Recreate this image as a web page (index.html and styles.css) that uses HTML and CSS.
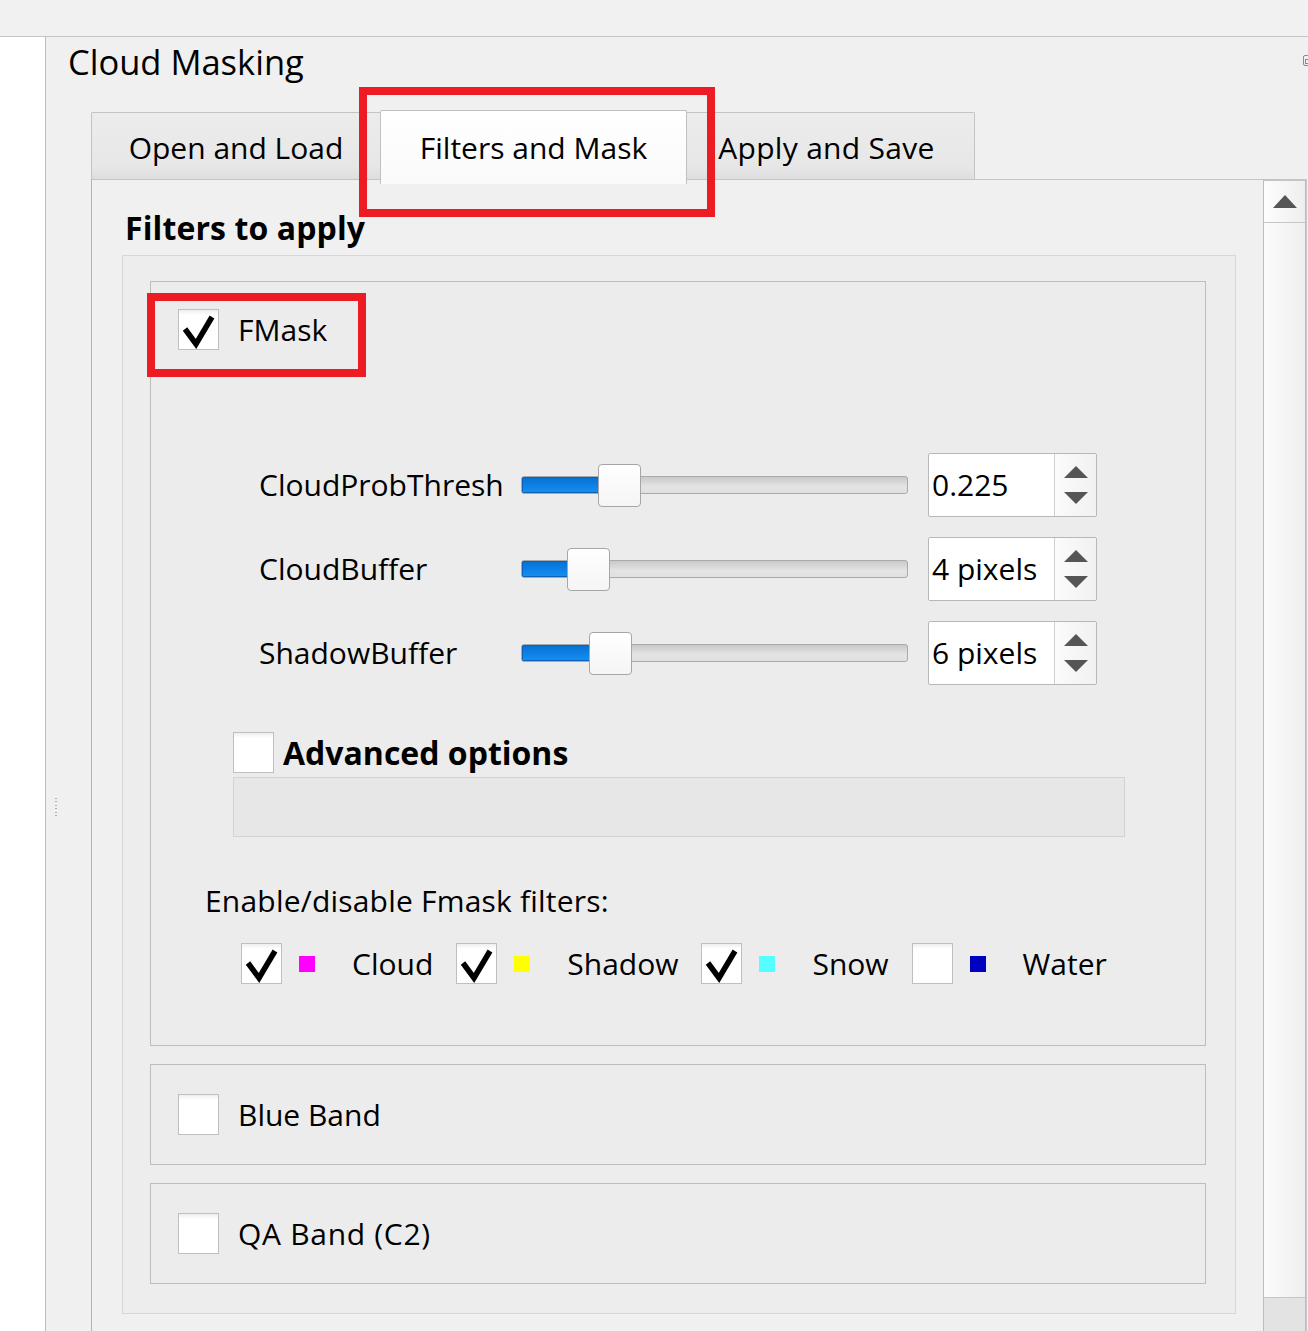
FILE: index.html
```html
<!DOCTYPE html>
<html>
<head>
<meta charset="utf-8">
<title>Cloud Masking</title>
<link rel="stylesheet" href="styles.css">
</head>
<body>
<div class="topbar"></div>
<div class="main">
  <div class="sidebar"></div>
  <div class="dock">
    <div class="dock-head">
      <h1 class="title">Cloud Masking</h1>
      <span class="float-icon"><span class="float-inner"></span></span>
    </div>
    <div class="dock-body">
      <div class="grip"><span class="grip-dots"></span></div>
      <div class="tabwidget">
        <div class="tabbar">
          <div class="tab tab-first">Open and Load</div>
          <div class="tab tab-active">Filters and Mask</div>
          <div class="tab tab-last">Apply and Save</div>
        </div>
        <div class="pane">
          <div class="viewport">
            <div class="group-title">Filters to apply</div>
            <div class="frame">
              <div class="box box-fmask">
                <div class="check-row">
                  <span class="cb"><svg class="tick" viewBox="0 0 39 39"><polyline points="6,19 17,34 33,7"/></svg></span>
                  <span class="lbl">FMask</span>
                </div>
                <div class="sliders">
                  <div class="s-label">CloudProbThresh</div>
                  <div class="slider">
                    <div class="groove"><div class="fill" style="width:80px"></div></div>
                    <div class="handle" style="left:77px"></div>
                  </div>
                  <div class="spin">
                    <div class="spin-text">0.225</div>
                    <div class="spin-btns">
                      <svg class="arrow" viewBox="0 0 24 12"><polygon points="12,0 24,12 0,12"/></svg>
                      <svg class="arrow" viewBox="0 0 24 12"><polygon points="0,0 24,0 12,12"/></svg>
                    </div>
                  </div>

                  <div class="s-label">CloudBuffer</div>
                  <div class="slider">
                    <div class="groove"><div class="fill" style="width:49px"></div></div>
                    <div class="handle" style="left:46px"></div>
                  </div>
                  <div class="spin">
                    <div class="spin-text">4 pixels</div>
                    <div class="spin-btns">
                      <svg class="arrow" viewBox="0 0 24 12"><polygon points="12,0 24,12 0,12"/></svg>
                      <svg class="arrow" viewBox="0 0 24 12"><polygon points="0,0 24,0 12,12"/></svg>
                    </div>
                  </div>

                  <div class="s-label">ShadowBuffer</div>
                  <div class="slider">
                    <div class="groove"><div class="fill" style="width:71px"></div></div>
                    <div class="handle" style="left:68px"></div>
                  </div>
                  <div class="spin">
                    <div class="spin-text">6 pixels</div>
                    <div class="spin-btns">
                      <svg class="arrow" viewBox="0 0 24 12"><polygon points="12,0 24,12 0,12"/></svg>
                      <svg class="arrow" viewBox="0 0 24 12"><polygon points="0,0 24,0 12,12"/></svg>
                    </div>
                  </div>
                </div>

                <div class="adv-row">
                  <span class="cb"></span>
                  <span class="adv-lbl">Advanced options</span>
                </div>
                <div class="adv-panel"></div>

                <div class="enable-lbl">Enable/disable Fmask filters:</div>
                <div class="filters">
                  <div class="filter">
                    <span class="cb"><svg class="tick" viewBox="0 0 39 39"><polyline points="6,19 17,34 33,7"/></svg></span>
                    <span class="swatch sw-cloud"></span>
                    <span class="f-lbl">Cloud</span>
                  </div>
                  <div class="filter">
                    <span class="cb"><svg class="tick" viewBox="0 0 39 39"><polyline points="6,19 17,34 33,7"/></svg></span>
                    <span class="swatch sw-shadow"></span>
                    <span class="f-lbl">Shadow</span>
                  </div>
                  <div class="filter">
                    <span class="cb"><svg class="tick" viewBox="0 0 39 39"><polyline points="6,19 17,34 33,7"/></svg></span>
                    <span class="swatch sw-snow"></span>
                    <span class="f-lbl">Snow</span>
                  </div>
                  <div class="filter">
                    <span class="cb"></span>
                    <span class="swatch sw-water"></span>
                    <span class="f-lbl">Water</span>
                  </div>
                </div>
              </div>

              <div class="box box-small">
                <span class="cb"></span>
                <span class="lbl">Blue Band</span>
              </div>
              <div class="box box-small">
                <span class="cb"></span>
                <span class="lbl lbl-qa">QA Band (C2)</span>
              </div>
            </div>
          </div>
          <div class="scrollbar">
            <div class="sb-up"><svg class="sb-arrow" viewBox="0 0 24 13"><polygon points="12,0 24,13 0,13"/></svg></div>
            <div class="sb-handle"></div>
            <div class="sb-track"></div>
          </div>
        </div>
      </div>
    </div>
  </div>
</div>
<div class="hl hl-tab"></div>
<div class="hl hl-fmask"></div>
</body>
</html>
```

FILE: styles.css
```css
* { box-sizing: border-box; }
html, body { margin: 0; padding: 0; }
body {
  width: 1308px;
  height: 1331px;
  overflow: hidden;
  position: relative;
  background: #f0f0f0;
  color: #000;
  font-family: "Open Sans", "Noto Sans", sans-serif;
}

.topbar {
  height: 37px;
  background: #f1f1f1;
  border-bottom: 1px solid #c4c4c4;
}

.main {
  display: flex;
  height: 1294px;
}

.sidebar {
  flex: none;
  width: 46px;
  background: #fff;
  border-right: 1px solid #bcbcbc;
}

.dock {
  flex: 1;
  min-width: 0;
  display: flex;
  flex-direction: column;
  overflow: hidden;
}

.dock-head {
  flex: none;
  height: 73px;
  display: flex;
  align-items: flex-start;
}

.title {
  margin: 3px 0 0 22px;
  font-size: 34.5px;
  font-weight: 400;
  line-height: 44px;
}

.float-icon {
  margin: 18px -5px 0 auto;
  width: 10px;
  height: 11px;
  border: 1px solid #8a8a8a;
  border-radius: 2px;
  display: flex;
  align-items: flex-end;
  justify-content: flex-start;
  padding: 0 0 1px 1px;
}
.float-inner {
  width: 5px;
  height: 5px;
  border: 1px solid #8a8a8a;
}

.dock-body {
  flex: 1;
  min-height: 0;
  display: flex;
}

.grip {
  flex: none;
  width: 45px;
  padding: 688px 0 0 9px;
}
.grip-dots {
  display: block;
  width: 2px;
  height: 18px;
  background: repeating-linear-gradient(#b0b0b0 0 1px, transparent 1px 3.4px);
}

.tabwidget {
  flex: 1;
  min-width: 0;
  margin-right: 1px;
  display: flex;
  flex-direction: column;
}

.tabbar {
  flex: none;
  height: 69px;
  display: flex;
  align-items: flex-end;
}

.tab {
  height: 67px;
  border: 1px solid #c4c4c4;
  border-bottom: none;
  background: linear-gradient(#ececec, #e7e7e7 80%, #dedede);
  font-size: 30px;
  line-height: 40px;
  display: flex;
  justify-content: center;
  padding-top: 15px;
  white-space: nowrap;
}
.tab-first {
  width: 289px;
  border-right: none;
  border-top-left-radius: 2px;
}
.tab-active {
  position: relative;
  z-index: 1;
  width: 307px;
  height: 74px;
  margin-bottom: -5px;
  padding-top: 17px;
  background: linear-gradient(#ffffff, #fafafa);
  border-color: #c0c0c0;
  border-radius: 2px 2px 0 0;
}
.tab-last {
  width: 288px;
  border-left: none;
  border-top-right-radius: 2px;
  padding-right: 8px;
  letter-spacing: 0.3px;
}

.pane {
  flex: 1;
  min-height: 0;
  display: flex;
  border-top: 1px solid #c4c4c4;
  border-left: 1px solid #b4b4b4;
  border-right: 1px solid #c8c8c8;
}

.viewport {
  flex: 1;
  min-width: 0;
  overflow: hidden;
  padding: 28px 0 0 30px;
}

.group-title {
  margin-left: 3px;
  font-size: 32px;
  font-weight: 700;
  line-height: 40px;
  letter-spacing: 0.1px;
}

.frame {
  margin-top: 7px;
  width: 1114px;
  border: 1px solid #d7d7d7;
  background: #ededed;
  padding: 25px 29px 29px 27px;
}

.box {
  border: 1px solid #bdbdbd;
  background: #ececec;
}

.box-fmask {
  padding: 27px 0 61px 27px;
}

.cb {
  flex: none;
  width: 41px;
  height: 41px;
  border: 1px solid #bfbfbf;
  background: linear-gradient(#eeeeee, #ffffff 5px);
  display: block;
}
.tick {
  display: block;
  width: 39px;
  height: 39px;
}
.tick polyline {
  fill: none;
  stroke: #000;
  stroke-width: 5.5;
  stroke-linejoin: miter;
  stroke-linecap: butt;
}

.check-row {
  display: flex;
  align-items: center;
  gap: 19px;
  height: 41px;
}
.lbl {
  font-size: 30px;
  line-height: 40px;
  white-space: nowrap;
}
.lbl-qa {
  letter-spacing: 0.7px;
}

.sliders {
  margin: 103px 0 0 81px;
  display: grid;
  grid-template-columns: 242px 387px 169px;
  grid-auto-rows: 64px;
  column-gap: 20px;
  row-gap: 20px;
  align-items: center;
}
.s-label {
  font-size: 30px;
  line-height: 40px;
  white-space: nowrap;
}

.slider {
  position: relative;
  height: 43px;
  display: flex;
  align-items: center;
}
.groove {
  width: 100%;
  height: 18px;
  border: 1px solid #aaaaaa;
  border-radius: 3px;
  background: linear-gradient(#c9c9c9, #e4e4e4 60%, #e0e0e0);
  overflow: hidden;
}
.fill {
  height: 100%;
  background: linear-gradient(#0470d4, #168ff1);
  border-right: 1px solid #0a5aa8;
  box-shadow: inset 0 0 0 1px #0b62b6;
}
.handle {
  position: absolute;
  top: 0;
  width: 43px;
  height: 43px;
  border: 1px solid #a6a6a6;
  border-radius: 4px;
  background: linear-gradient(#ffffff, #f5f5f5);
}

.spin {
  height: 64px;
  border: 1px solid #b8b8b8;
  border-radius: 2px;
  background: #fff;
  display: flex;
}
.spin-text {
  flex: 1;
  padding-left: 3px;
  font-size: 30px;
  line-height: 40px;
  display: flex;
  align-items: center;
  white-space: nowrap;
}
.spin-btns {
  flex: none;
  width: 42px;
  border-left: 1px solid #d0d0d0;
  background: linear-gradient(90deg, #fbfbfb, #f1f1f1);
  display: flex;
  flex-direction: column;
  align-items: center;
  justify-content: center;
  gap: 14px;
}
.arrow {
  display: block;
  width: 24px;
  height: 12px;
  fill: #555;
}

.adv-row {
  margin: 47px 0 0 55px;
  display: flex;
  align-items: center;
  gap: 9px;
  height: 41px;
}
.adv-lbl {
  font-size: 32px;
  font-weight: 700;
  line-height: 40px;
  white-space: nowrap;
}
.adv-panel {
  margin: 4px 0 0 55px;
  width: 892px;
  height: 60px;
  border: 1px solid #d3d3d3;
  background: #e7e7e7;
}

.enable-lbl {
  margin: 44px 0 0 27px;
  font-size: 30px;
  line-height: 40px;
  white-space: nowrap;
  letter-spacing: 0.2px;
}

.filters {
  margin: 22px 0 0 63px;
  display: flex;
  align-items: center;
  gap: 23px;
  height: 41px;
}
.filter {
  display: flex;
  align-items: center;
}
.swatch {
  flex: none;
  width: 16px;
  height: 16px;
  margin: 1px 37px 0 17px;
}
.sw-cloud { background: #ff00ff; }
.sw-shadow { background: #ffff00; }
.sw-snow { background: #55ffff; }
.sw-water { background: #0000c0; }
.f-lbl {
  font-size: 30px;
  line-height: 40px;
  white-space: nowrap;
}

.box-small {
  margin-top: 18px;
  height: 101px;
  padding-left: 27px;
  display: flex;
  align-items: center;
  gap: 19px;
}

.scrollbar {
  flex: none;
  width: 43px;
  border-left: 1px solid #bdbdbd;
  border-right: 1px solid #bdbdbd;
  border-top: 1px solid #c4c4c4;
  display: flex;
  flex-direction: column;
  background: #e4e4e4;
}
.sb-up {
  flex: none;
  height: 42px;
  border-bottom: 1px solid #c6c6c6;
  background: linear-gradient(90deg, #fdfdfd, #eeeeee);
  display: flex;
  align-items: center;
  justify-content: center;
}
.sb-arrow {
  display: block;
  width: 24px;
  height: 13px;
  fill: #555;
}
.sb-handle {
  flex: none;
  height: 1075px;
  border-bottom: 1px solid #c6c6c6;
  background: linear-gradient(90deg, #fbfbfb, #efefef);
}
.sb-track {
  flex: 1;
  background: #e3e3e3;
}

.hl {
  position: absolute;
  border: 8px solid #ed1c24;
  pointer-events: none;
}
.hl-tab {
  left: 359px;
  top: 87px;
  width: 356px;
  height: 130px;
}
.hl-fmask {
  left: 147px;
  top: 293px;
  width: 219px;
  height: 84px;
}
```
